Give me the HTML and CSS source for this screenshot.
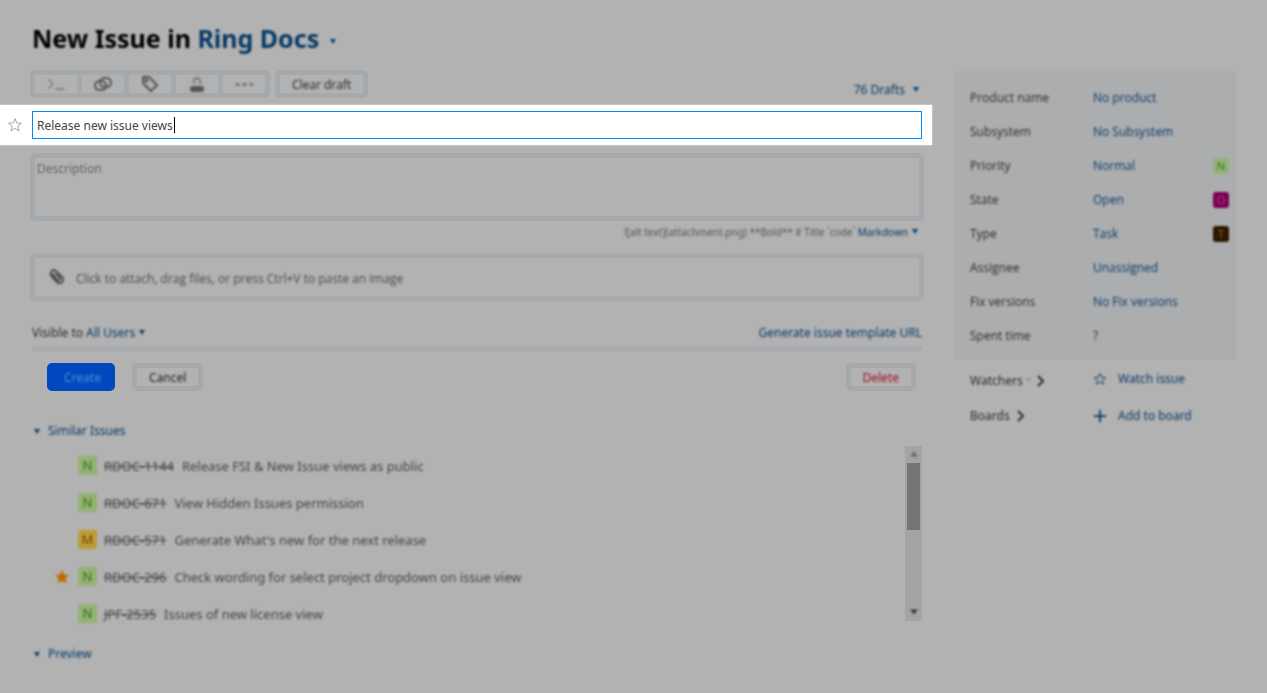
FILE: index.html
```html
<!DOCTYPE html>
<html lang="en">
<head>
<meta charset="utf-8">
<title>New Issue in Ring Docs</title>
<link rel="stylesheet" href="styles.css">
</head>
<body>
<div class="page">
  <main class="issue">
    <h1 class="title soft">New Issue in <a class="link" href="#">Ring Docs</a><span class="caret caret-title"></span></h1>

    <div class="topbar">
      <div class="tools">
        <button class="tool" type="button" aria-label="Command"><svg class="icon thin soft" viewBox="0 0 18 18"><path d="M1 4l5 5-5 5M8 14h9"/></svg></button>
        <button class="tool" type="button" aria-label="Link"><svg class="icon soft" viewBox="0 0 18 18"><rect x="6" y="3" width="11" height="9" rx="4.500"/><rect x="1" y="6" width="11" height="9" rx="4.500"/></svg></button>
        <button class="tool" type="button" aria-label="Tag"><svg class="icon soft" viewBox="0 0 18 18"><path d="M2 2h6l8 8-6 6-8-8z"/><circle cx="5.500" cy="5.500" r="1"/></svg></button>
        <button class="tool" type="button" aria-label="Visibility"><svg class="icon soft" viewBox="0 0 18 18"><path class="faded" d="M6 9V6a3 3 0 0 1 6 0v3"/><rect class="solid" x="3" y="12" width="12" height="4" rx="2"/></svg></button>
        <button class="tool" type="button" aria-label="More"><svg class="icon thin soft" viewBox="0 0 18 18"><path class="solid" d="M1 9h3v1H1zM8 9h3v1H8zM15 9h3v1h-3z"/></svg></button>
      </div>
      <button class="button compact" type="button"><span class="soft">Clear draft</span></button>
      <button class="drafts link soft" type="button">76 Drafts<span class="caret"></span></button>
    </div>

    <div class="spotlight">
      <button class="star" type="button" aria-label="Star issue"><svg viewBox="0 0 16 16"><path d="M8 1.500l1.700 4.500 4.900.2-3.800 3 1.300 4.800L8 11.300 3.900 14l1.300-4.800-3.800-3L6.300 6z"/></svg></button>
      <div class="summary">
        <input class="summary-input" type="text" aria-label="Summary" value="Release new issue views">
        <span class="cursor"></span>
      </div>
    </div>

    <textarea class="description" aria-label="Description" placeholder="Description"></textarea>
    <div class="hint soft">![alt text](attachment.png) **Bold** # Title `code` <a class="link" href="#">Markdown</a><span class="caret"></span></div>

    <button class="attach" type="button">
      <svg class="clip soft" viewBox="0 0 20 18"><path d="M3 6l7 8c4 4 9-1 6-5L10 3C7 0 3 3 5 6l6 6c2 1 4-1 2-3L8 5"/></svg>
      <span class="attach-text soft">Click to attach, drag files, or press Ctrl+V to paste an image</span>
    </button>

    <div class="visibility soft">
      <span>Visible to <a class="link" href="#">All Users</a><span class="caret caret-near"></span></span>
      <a class="link" href="#">Generate issue template URL</a>
    </div>
    <hr class="rule">

    <div class="actions">
      <button class="button primary" type="button"><span class="soft">Create</span></button>
      <button class="button" type="button"><span class="soft">Cancel</span></button>
      <button class="button danger" type="button"><span class="soft">Delete</span></button>
    </div>

    <button class="section link soft" type="button"><span class="caret"></span>Similar Issues</button>
    <div class="similar">
      <ul class="list soft">
        <li class="row"><span class="mark"></span><span class="badge green">N</span><s class="id">RDOC-1144</s><span>Release FSI &amp; New Issue views as public</span></li>
        <li class="row"><span class="mark"></span><span class="badge green">N</span><s class="id">RDOC-671</s><span>View Hidden Issues permission</span></li>
        <li class="row"><span class="mark"></span><span class="badge yellow">M</span><s class="id">RDOC-571</s><span>Generate What's new for the next release</span></li>
        <li class="row"><span class="mark"><svg class="gold" viewBox="0 0 16 16"><path d="M8 1l2.200 4.600 5 .6-3.700 3.400 1 5L8 12.200 3.500 14.600l1-5L.8 6.200l5-.6z"/></svg></span><span class="badge green">N</span><s class="id">RDOC-296</s><span>Check wording for select project dropdown on issue view</span></li>
        <li class="row"><span class="mark"></span><span class="badge green">N</span><s class="id">JPF-2535</s><span>Issues of new license view</span></li>
      </ul>
      <div class="scrollbar">
        <svg class="arrow faint" viewBox="0 0 8 8"><path d="M1 6l3-4 3 4z"/></svg>
        <div class="thumb"></div>
        <svg class="arrow" viewBox="0 0 8 8"><path d="M1 2l3 4 3-4z"/></svg>
      </div>
    </div>
    <button class="section preview link soft" type="button"><span class="caret"></span>Preview</button>
  </main>

  <aside class="side">
    <div class="fields">
      <div class="field"><span class="soft">Product name</span><button class="link soft" type="button">No product</button></div>
      <div class="field"><span class="soft">Subsystem</span><button class="link soft" type="button">No Subsystem</button></div>
      <div class="field"><span class="soft">Priority</span><button class="link soft" type="button">Normal</button><span class="chip green soft">N</span></div>
      <div class="field"><span class="soft">State</span><button class="link soft" type="button">Open</button><span class="chip magenta soft">O</span></div>
      <div class="field"><span class="soft">Type</span><button class="link soft" type="button">Task</button><span class="chip brown soft">T</span></div>
      <div class="field"><span class="soft">Assignee</span><button class="link soft" type="button">Unassigned</button></div>
      <div class="field"><span class="soft">Fix versions</span><button class="link soft" type="button">No Fix versions</button></div>
      <div class="field"><span class="soft">Spent time</span><span class="soft">?</span></div>
    </div>
    <div class="extras soft">
      <div class="extra watchers">
        <button class="expand" type="button">Watchers <span class="dash">-</span><svg class="chevron" viewBox="0 0 10 12"><path d="M2 1l5 5-5 5"/></svg></button>
        <button class="link with-icon" type="button"><svg viewBox="0 0 16 16"><path d="M8 1.500l1.700 4.500 4.900.2-3.800 3 1.300 4.800L8 11.300 3.900 14l1.300-4.800-3.800-3L6.300 6z"/></svg>Watch issue</button>
      </div>
      <div class="extra">
        <button class="expand" type="button">Boards<svg class="chevron" viewBox="0 0 10 12"><path d="M2 1l5 5-5 5"/></svg></button>
        <button class="link with-icon" type="button"><svg viewBox="0 0 16 16"><path class="plus" d="M8 1v14M1 8h14"/></svg>Add to board</button>
      </div>
    </div>
  </aside>
</div>
</body>
</html>
```
FILE: styles.css
```css
* {
  box-sizing: border-box;
}

body {
  margin: 0;
  background: #b2b2b2;
  color: #2b2b2b;
  font: 12px/20px "Noto Sans", "Open Sans", sans-serif;
}

button {
  margin: 0;
  padding: 0;
  border: 0;
  background: none;
  color: inherit;
  font: inherit;
  text-align: left;
}

svg {
  fill: none;
  stroke: currentColor;
}

.soft {
  filter: blur(1px);
}

.link {
  color: #083a66;
  text-decoration: none;
}

.caret {
  display: inline-block;
  margin-left: 8px;
  border: 3px solid transparent;
  border-top: 5px solid #0d426f;
  border-bottom: 0;
  vertical-align: 2px;
}

.caret-title {
  margin-left: 11px;
  vertical-align: 4px;
}

.caret-near {
  margin-left: 4px;
}

.page {
  display: grid;
  grid-template-columns: minmax(0, 1fr) 282px;
  gap: 30px;
  padding: 20px 31px 28px 30px;
}

.issue {
  display: flex;
  flex-direction: column;
}

.title {
  margin: 0 0 14px;
  padding-left: 2px;
  color: #000;
  font-size: 25px;
  line-height: 36px;
}

.topbar {
  display: flex;
  gap: 5px;
  height: 28px;
}

.tools {
  display: flex;
  border: 5px solid #a3a9ad;
  border-radius: 5px;
}

.tool {
  display: grid;
  place-items: center;
  width: 42px;
  color: #555;
}

.tool + .tool {
  width: 47px;
  border-left: 5px solid #a3a9ad;
}

.icon {
  width: 18px;
  height: 18px;
  stroke-width: 2;
}

.thin {
  stroke-width: 1;
}

.solid {
  fill: currentColor;
}

.faded {
  opacity: 0.6;
}

.button {
  height: 28px;
  padding: 0 12px;
  border: 5px solid #a3a9ad;
  border-radius: 5px;
  color: #222;
  line-height: 20px;
  text-align: center;
}

.compact {
  font-family: "Open Sans", sans-serif;
}

.drafts {
  align-self: flex-end;
  margin: 0 5px -2px auto;
}

.spotlight {
  display: grid;
  grid-template-columns: 30px minmax(0, 1fr);
  align-items: center;
  height: 40px;
  margin: 7px -8px 8px -30px;
  padding: 0 10px 0 0;
  background: #fff;
  box-shadow: 0 0 2px #eee;
}

.star {
  display: grid;
  padding-left: 7px;
  color: #aaa;
}

.star svg {
  width: 16px;
  height: 16px;
}

.summary {
  position: relative;
  margin-left: 2px;
}

.summary-input {
  display: block;
  width: 100%;
  height: 28px;
  padding: 0 4px;
  border: 1px solid #008eff;
  outline: 0;
  background: #fff;
  color: #444;
  font: inherit;
}

.cursor {
  position: absolute;
  top: 6px;
  left: 142px;
  width: 1px;
  height: 16px;
  background: #000;
}

.description {
  display: block;
  width: 100%;
  height: 68px;
  padding: 1px 2px;
  border: 5px solid #a3a9ad;
  border-radius: 5px;
  outline: 0;
  background: none;
  font: inherit;
  resize: none;
}

.description::placeholder {
  color: transparent;
  text-shadow: 0 0 2px #666;
}

.hint {
  margin: 1px 6px 11px 0;
  color: #555;
  font-size: 10px;
  text-align: right;
}

.hint .caret {
  margin-left: 4px;
}

.attach {
  display: flex;
  align-items: center;
  gap: 10px;
  height: 48px;
  margin-bottom: 22px;
  padding: 0 12px;
  border: 5px solid #a9a9a9;
  border-radius: 5px;
  color: #4a4a4a;
  font-family: "Open Sans", sans-serif;
}

.attach-text {
  padding-top: 3px;
}

.clip {
  width: 19px;
  height: 18px;
  stroke-width: 2;
}

.visibility {
  display: flex;
  justify-content: space-between;
  margin: 0 2px 3px;
}

.rule {
  width: calc(100% - 4px);
  height: 5px;
  margin: 0 2px 12px;
  border: 0;
  background: #a9abae;
}

.actions {
  display: flex;
  gap: 17px;
  margin-bottom: 30px;
  padding: 0 8px 0 17px;
}

.primary {
  width: 68px;
  border-color: #0048bd;
  background: #0048bd;
  color: #4c90d4;
}

.danger {
  margin-left: auto;
  color: #a10d20;
}

.section {
  display: flex;
  align-items: center;
  align-self: flex-start;
  gap: 8px;
  padding-left: 4px;
}

.section .caret {
  margin-left: 0;
}

.similar {
  display: flex;
  justify-content: space-between;
  height: 175px;
  margin: 5px 2px 23px 0;
}

.list {
  margin: 0;
  padding: 1px 0 0;
  font-size: 13px;
  list-style: none;
}

.row {
  display: flex;
  align-items: center;
  height: 37px;
  color: #444;
}

.mark {
  width: 48px;
  padding: 4px 0 0 25px;
}

.gold {
  width: 14px;
  height: 14px;
  fill: #b96b00;
  stroke: #bd7900;
}

.badge {
  width: 19px;
  height: 19px;
  margin-right: 7px;
  border-radius: 2px;
  line-height: 19px;
  text-align: center;
}

.green {
  background: #93b274;
  color: #2f7410;
}

.yellow {
  background: #bc9d38;
  color: #7a4300;
}

.id {
  margin-right: 8px;
}

.scrollbar {
  display: grid;
  grid-template-rows: 17px 67px 1fr;
  justify-items: center;
  width: 17px;
  background: #a4a4a4;
}

.arrow {
  align-self: end;
  width: 10px;
  height: 10px;
  margin-bottom: 4px;
  fill: #333;
  stroke: none;
  filter: blur(1px);
}

.faint {
  fill: #666;
}

.thumb {
  width: 13px;
  background: #757575;
}

.side {
  padding-top: 51px;
}

.fields {
  padding: 10px 7px 7px 16px;
  background: #abadaf;
  font-family: "Open Sans", sans-serif;
}

.field {
  display: grid;
  grid-template-columns: 123px minmax(0, 1fr) 16px;
  align-items: center;
  height: 34px;
}

.chip {
  width: 16px;
  height: 16px;
  border-radius: 3px;
  font-size: 11px;
  line-height: 16px;
  text-align: center;
}

.magenta {
  background: #7b0052;
  color: #b04080;
}

.brown {
  background: #2c1600;
  color: #8f6a30;
}

.extras {
  padding-left: 16px;
}

.extra {
  display: grid;
  grid-template-columns: 123px minmax(0, 1fr);
  align-items: center;
  height: 37px;
}

.expand {
  display: flex;
  align-items: center;
}

.watchers .expand {
  padding-top: 4px;
}

.dash {
  margin-left: 4px;
  padding-bottom: 6px;
  font-size: 10px;
}

.chevron {
  width: 10px;
  height: 12px;
  margin-left: 6px;
  stroke-width: 2;
}

.with-icon {
  display: flex;
  align-items: center;
  gap: 11px;
}

.with-icon svg {
  width: 14px;
  height: 14px;
}

.plus {
  stroke-width: 2;
}
```
